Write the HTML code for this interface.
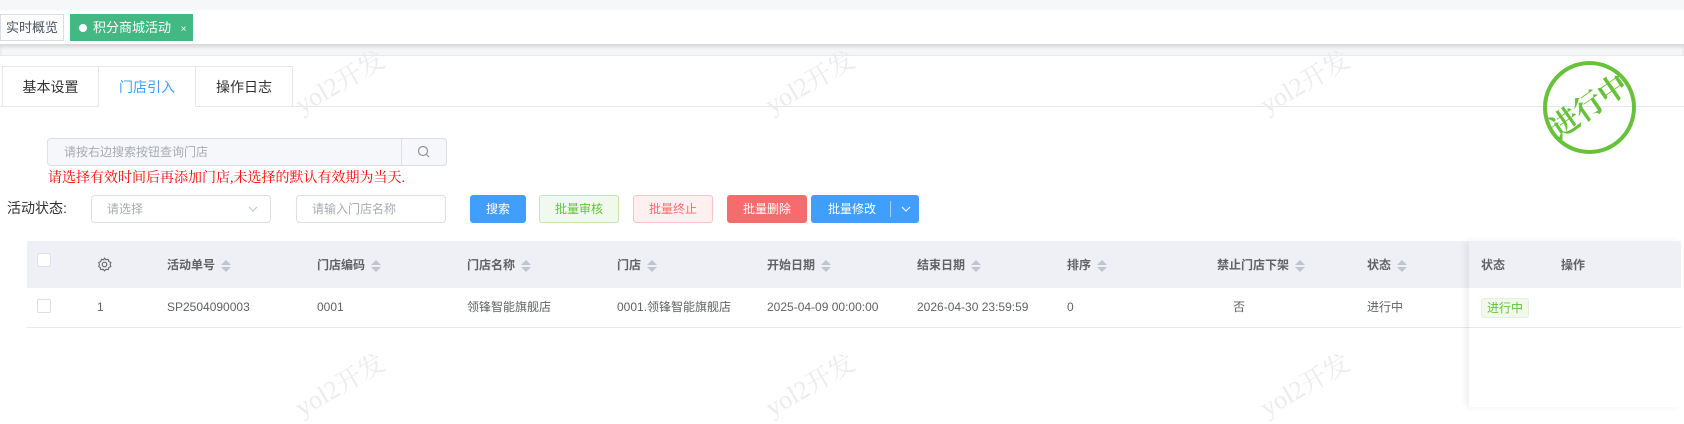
<!DOCTYPE html>
<html><head><meta charset="utf-8">
<style>
*{box-sizing:border-box;margin:0;padding:0}
body{width:1684px;height:407px;overflow:hidden;background:#fff;font-family:"Liberation Sans","Noto Sans CJK SC",sans-serif;font-size:13px;color:#606266;position:relative}
.a{position:absolute}
.sort{display:inline-block;width:10px;height:14px;vertical-align:middle;margin-left:6px;position:relative}
.sort:before{content:"";position:absolute;left:0;top:1px;border:5px solid transparent;border-bottom:5px solid #c0c4cc;border-top:0}
.sort:after{content:"";position:absolute;left:0;top:8px;border:5px solid transparent;border-top:5px solid #c0c4cc;border-bottom:0}
.btn{position:absolute;top:195px;height:28px;border-radius:3px;font-size:12px;text-align:center;line-height:26px;border:1px solid}
.wm{position:absolute;color:#ececec;font-size:26px;transform:rotate(-30deg);font-family:"Liberation Serif","Noto Serif CJK SC",serif}
.th{position:absolute;top:257px;color:#606266;font-size:12px;font-weight:bold;line-height:16px}
.td{position:absolute;top:299px;font-size:12px;color:#606266;line-height:16px}
</style></head><body>
<div class="a" style="left:0;top:0;width:1684px;height:10px;background:#f6f7f9"></div>
<div class="a" style="left:0;top:44px;width:1684px;height:11px;background:#f5f6f8;box-shadow:inset 0 3px 3px rgba(0,0,0,.12)"></div>
<div class="a" style="left:0;top:55px;width:1684px;height:1px;background:#e8e8ee"></div>
<div class="a" style="left:0;top:14px;width:64px;height:27px;border:1px solid #d8dce5;font-size:13px;line-height:25px;text-align:center;color:#495060">实时概览</div>
<div class="a" style="left:70px;top:14px;width:123px;height:27px;background:#42b983;color:#fff;font-size:13px;line-height:27px;padding-left:9px"><span style="display:inline-block;width:8px;height:8px;border-radius:50%;background:#fff;margin-right:6px"></span>积分商城活动 <span style="font-size:10px;margin-left:6px">×</span></div>

<div class="a" style="left:0;top:106px;width:1684px;height:1px;background:#e4e7ed"></div>
<div class="a" style="left:2px;top:66px;width:97px;height:40px;border:1px solid #e4e7ed;border-bottom:none;background:#fff;font-size:14px;color:#303133;text-align:center;line-height:40px">基本设置</div>
<div class="a" style="left:98px;top:66px;width:98px;height:41px;border:1px solid #e4e7ed;border-bottom:none;background:#fff;font-size:14px;color:#409eff;text-align:center;line-height:40px">门店引入</div>
<div class="a" style="left:195px;top:66px;width:98px;height:40px;border:1px solid #e4e7ed;border-bottom:none;background:#fff;font-size:14px;color:#303133;text-align:center;line-height:40px">操作日志</div>

<div class="wm" style="left:290px;top:62px">yol2开发</div>
<div class="wm" style="left:760px;top:62px">yol2开发</div>
<div class="wm" style="left:1255px;top:62px">yol2开发</div>
<div class="wm" style="left:290px;top:365px">yol2开发</div>
<div class="wm" style="left:760px;top:365px">yol2开发</div>
<div class="wm" style="left:1255px;top:365px">yol2开发</div>

<div class="a" style="left:47px;top:138px;width:400px;height:28px;border:1px solid #dcdfe6;border-radius:4px;background:#f5f7fa"></div>
<div class="a" style="left:64px;top:144px;font-size:12px;color:#a8abb2;line-height:16px">请按右边搜索按钮查询门店</div>
<div class="a" style="left:401px;top:138px;width:1px;height:28px;background:#dcdfe6"></div>
<svg class="a" style="left:417px;top:145px" width="14" height="14" viewBox="0 0 14 14"><circle cx="6" cy="6" r="4.5" fill="none" stroke="#909399" stroke-width="1.2"/><path d="M9.5 9.5L12 12" stroke="#909399" stroke-width="1.2"/></svg>
<div class="a" style="left:48px;top:171px;font-size:14px;color:#f00;font-family:'Liberation Serif','Noto Serif CJK SC',serif;line-height:16px">请选择有效时间后再添加门店,未选择的默认有效期为当天.</div>

<div class="a" style="left:7px;top:200px;font-size:14px;color:#303133;line-height:16px">活动状态:</div>
<div class="a" style="left:91px;top:195px;width:180px;height:28px;border:1px solid #dcdfe6;border-radius:4px"></div>
<div class="a" style="left:107px;top:201px;font-size:12px;color:#a8abb2;line-height:16px">请选择</div>
<svg class="a" style="left:248px;top:205px" width="10" height="8"><path d="M1 2l4 4 4-4" fill="none" stroke="#c0c4cc" stroke-width="1"/></svg>
<div class="a" style="left:296px;top:195px;width:150px;height:28px;border:1px solid #dcdfe6;border-radius:4px"></div>
<div class="a" style="left:312px;top:201px;font-size:12px;color:#a8abb2;line-height:16px">请输入门店名称</div>

<div class="btn" style="left:470px;width:56px;background:#409eff;border-color:#409eff;color:#fff">搜索</div>
<div class="btn" style="left:539px;width:80px;background:#f0f9eb;border-color:#c2e7b0;color:#67c23a">批量审核</div>
<div class="btn" style="left:633px;width:80px;background:#fef0f0;border-color:#fbc4c4;color:#f56c6c">批量终止</div>
<div class="btn" style="left:727px;width:80px;background:#f56c6c;border-color:#f56c6c;color:#fff">批量删除</div>
<div class="btn" style="left:811px;width:108px;background:#409eff;border-color:#409eff;color:#fff;text-align:left;padding-left:16px">批量修改<span style="position:absolute;left:78px;top:5px;width:1px;height:16px;background:#a0cfff"></span><svg style="position:absolute;left:89px;top:10px" width="10" height="7"><path d="M1 1l4 4 4-4" fill="none" stroke="#fff" stroke-width="1"/></svg></div>

<div class="a" style="left:27px;top:241px;width:1654px;height:47px;background:#eef0f5"></div>
<div class="a" style="left:27px;top:327px;width:1654px;height:1px;background:#e8eaef"></div>
<div class="a" style="left:1469px;top:241px;width:212px;height:166px;background:#fff;box-shadow:-4px 0 6px rgba(0,0,0,.06)"></div>
<div class="a" style="left:1469px;top:241px;width:212px;height:47px;background:#eef0f5"></div>
<div class="a" style="left:1469px;top:327px;width:212px;height:1px;background:#e8eaef"></div>

<div class="a" style="left:37px;top:253px;width:14px;height:14px;border:1px solid #dcdfe6;background:#fff;border-radius:2px"></div>
<div class="a" style="left:37px;top:299px;width:14px;height:14px;border:1px solid #dcdfe6;background:#fff;border-radius:2px"></div>
<svg class="a" style="left:97px;top:257px" width="15" height="15" viewBox="0 0 13 13"><circle cx="6.5" cy="6.5" r="2" fill="none" stroke="#606266"/><path d="M6.5 1l1.3 1.4 1.9-.4.5 1.9 1.8.8-.6 1.8.6 1.8-1.8.8-.5 1.9-1.9-.4-1.3 1.4-1.3-1.4-1.9.4-.5-1.9L1.5 8.3l.6-1.8-.6-1.8 1.8-.8.5-1.9 1.9.4z" fill="none" stroke="#606266" stroke-width=".9"/></svg>

<div class="th" style="left:167px">活动单号<span class="sort"></span></div>
<div class="th" style="left:317px">门店编码<span class="sort"></span></div>
<div class="th" style="left:467px">门店名称<span class="sort"></span></div>
<div class="th" style="left:617px">门店<span class="sort"></span></div>
<div class="th" style="left:767px">开始日期<span class="sort"></span></div>
<div class="th" style="left:917px">结束日期<span class="sort"></span></div>
<div class="th" style="left:1067px">排序<span class="sort"></span></div>
<div class="th" style="left:1217px">禁止门店下架<span class="sort"></span></div>
<div class="th" style="left:1367px">状态<span class="sort"></span></div>
<div class="th" style="left:1481px">状态</div>
<div class="th" style="left:1561px">操作</div>

<div class="td" style="left:97px">1</div>
<div class="td" style="left:167px">SP2504090003</div>
<div class="td" style="left:317px">0001</div>
<div class="td" style="left:467px">领锋智能旗舰店</div>
<div class="td" style="left:617px">0001.领锋智能旗舰店</div>
<div class="td" style="left:767px">2025-04-09 00:00:00</div>
<div class="td" style="left:917px">2026-04-30 23:59:59</div>
<div class="td" style="left:1067px">0</div>
<div class="td" style="left:1233px">否</div>
<div class="td" style="left:1367px">进行中</div>
<div class="a" style="left:1481px;top:298px;width:48px;height:20px;background:#f0f9eb;border:1px solid #e1f3d8;border-radius:3px;color:#67c23a;font-size:12px;text-align:center;line-height:18px">进行中</div>

<div class="a" style="left:1543px;top:61px;width:93px;height:93px;border:4px solid #67c23a;border-radius:50%"></div>
<div class="a" style="left:1542px;top:92px;width:95px;text-align:center;color:#67c23a;font-size:29px;font-weight:bold;line-height:30px;transform:rotate(-35deg);font-family:'Liberation Serif','Noto Serif CJK SC',serif">进行中</div>
</body></html>
